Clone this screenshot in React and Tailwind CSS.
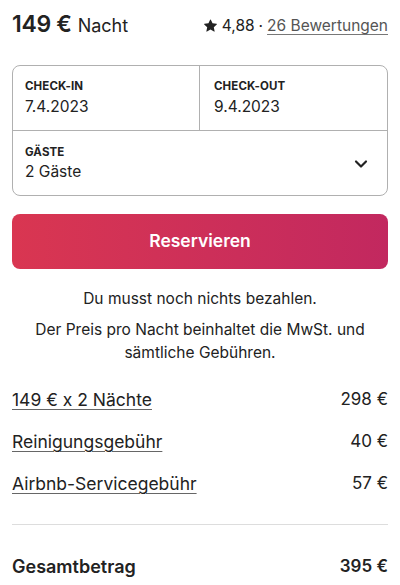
import { ChevronDown } from "lucide-react";

const font = { fontFamily: "Inter, 'Noto Sans', sans-serif" };

function Row({ label, value }) {
  return (
    <div className="flex items-center justify-between h-[42px]">
      <span className="text-[17.5px] text-[#222] underline decoration-[1px] underline-offset-[3px] decoration-[#666]">{label}</span>
      <span className="text-[17px] text-[#222]">{value}</span>
    </div>
  );
}

export default function App() {
  return (
    <div className="w-[400px] h-[585px] bg-white overflow-hidden px-3 text-[#222]" style={font}>
      <div className="flex items-baseline justify-between pt-[7px] h-[45px]">
        <div className="flex items-baseline gap-[6px]">
          <span className="text-[23px] font-semibold tracking-[-0.3px]">149 €</span>
          <span className="text-[18px] text-[#222]">Nacht</span>
        </div>
        <div className="flex items-center text-[15.5px]">
          <svg viewBox="0 0 32 32" className="w-[13px] h-[13px] mr-[5px] fill-[#222]">
            <path d="M15.1 1.58l-4.13 8.88-9.86 1.27a1 1 0 0 0-.54 1.74l7.3 6.57-1.970 9.85a1 1 0 0 0 1.48 1.06l8.62-5 8.63 5a1 1 0 0 0 1.48-1.06l-1.97-9.85 7.3-6.57a1 1 0 0 0-.55-1.73l-9.86-1.280-4.12-8.88a1 1 0 0 0-1.82 0z" />
          </svg>
          <span>4,88</span>
          <span className="mx-[4px]">·</span>
          <span className="underline underline-offset-[3px] text-[#555] decoration-[#777]">26 Bewertungen</span>
        </div>
      </div>

      <div className="mt-[20px] border border-[#b0b0b0] rounded-[8px]">
        <div className="grid grid-cols-2 border-b border-[#b0b0b0] h-[65px]">
          <div className="border-r border-[#b0b0b0] pl-[12px] pt-[13px]">
            <div className="text-[11.5px] font-bold tracking-[0.1px] leading-[14px]">CHECK-IN</div>
            <div className="text-[15.5px] leading-[22px] mt-[3px]">7.4.2023</div>
          </div>
          <div className="pl-[14px] pt-[13px]">
            <div className="text-[11.5px] font-bold tracking-[0.1px] leading-[14px]">CHECK-OUT</div>
            <div className="text-[15.5px] leading-[22px] mt-[3px]">9.4.2023</div>
          </div>
        </div>
        <div className="flex items-center justify-between h-[64px] pl-[12px] pr-[16px]">
          <div className="pt-[2px]">
            <div className="text-[11.5px] font-bold tracking-[0.1px] leading-[14px]">GÄSTE</div>
            <div className="text-[15.5px] leading-[22px] mt-[2px]">2 Gäste</div>
          </div>
          <ChevronDown size={20} strokeWidth={2.6} className="text-[#222] mt-[1px]" />
        </div>
      </div>

      <button
        type="button"
        className="mt-[18px] w-full h-[55px] rounded-[8px] bg-gradient-to-r from-[#d93651] to-[#c2285f] text-white text-[17.5px] font-semibold"
      >
        Reservieren
      </button>

      <p className="mt-[20px] text-center text-[15.5px] leading-[20px]">Du musst noch nichts bezahlen.</p>
      <p className="mt-[9px] text-center text-[15.5px] leading-[23px]">
        Der Preis pro Nacht beinhaltet die MwSt. und
        <br />
        sämtliche Gebühren.
      </p>

      <div className="mt-[15px]">
        <Row label="149 € x 2 Nächte" value="298 €" />
        <Row label="Reinigungsgebühr" value="40 €" />
        <Row label="Airbnb-Servicegebühr" value="57 €" />
      </div>

      <div className="mt-[19px] border-t border-[#dddddd]" />

      <div className="flex items-center justify-between mt-[28px]">
        <span className="text-[18px] font-semibold">Gesamtbetrag</span>
        <span className="text-[17px] font-semibold">395 €</span>
      </div>
    </div>
  );
}
